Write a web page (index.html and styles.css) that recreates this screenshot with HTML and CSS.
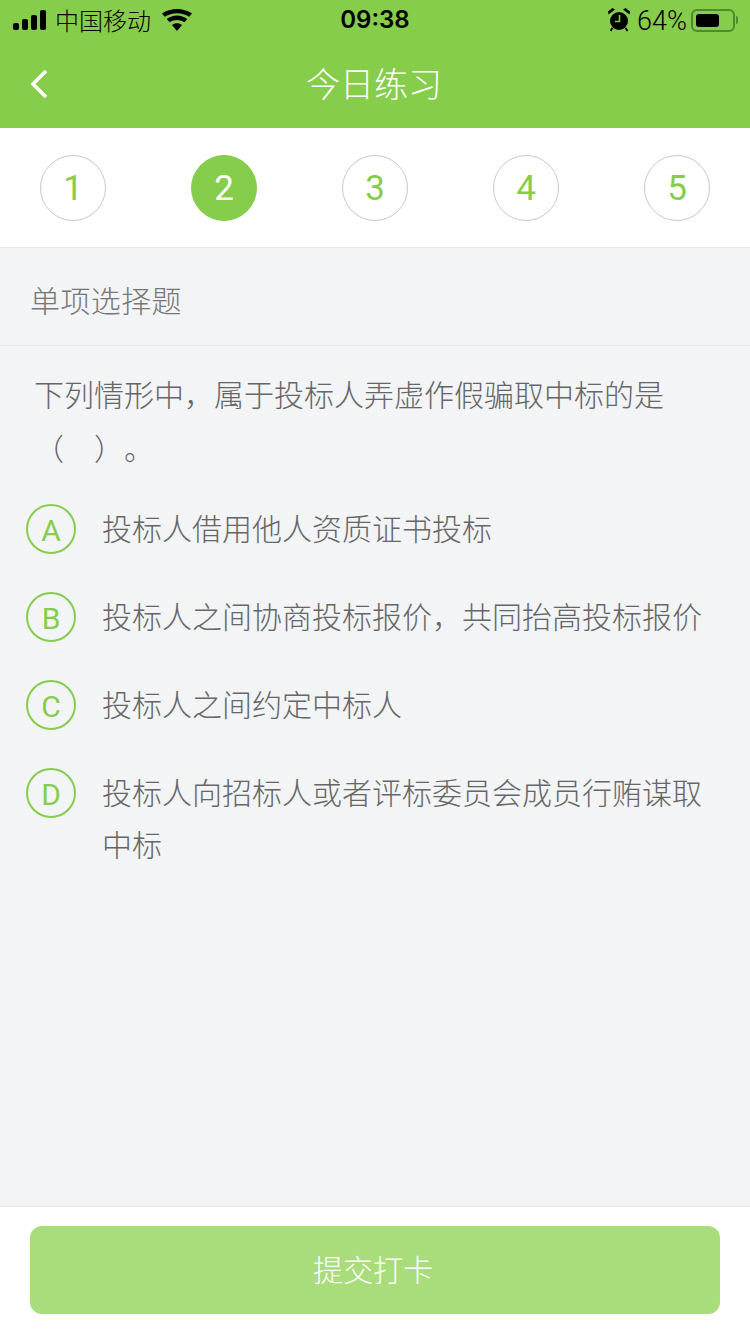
FILE: index.html
```html
<!DOCTYPE html>
<html lang="zh-CN">
<head>
    <meta charset="UTF-8">
    <meta name="viewport" content="width=device-width, initial-scale=1.0">
    <title>今日练习</title>
    <link rel="stylesheet" href="styles.css">
</head>
<body>
    <header class="top">
        <div class="status">
            <div class="status-left">
                <svg class="signal" width="34" height="20" viewBox="0 0 34 20">
                    <rect x="0" y="13" width="6" height="7" rx="2"/>
                    <rect x="9" y="9" width="6" height="11" rx="2"/>
                    <rect x="18" y="5" width="6" height="15" rx="2"/>
                    <rect x="27" y="0" width="6" height="20" rx="2"/>
                </svg>
                <span class="carrier">中国移动</span>
                <svg class="wifi" width="30" height="22" viewBox="0 0 30 22">
                    <path d="M15 22l-5-6c3-2.400 7-2.400 10 0z"/>
                    <path d="M7.700 13.300l-3-3.400c6-4.700 14.600-4.700 20.600 0l-3 3.400c-4.300-3.200-10.300-3.200-14.600 0z"/>
                    <path d="M2.800 7.800L0 4.600c8.700-6.100 21.300-6.100 30 0l-2.800 3.200C19.900 2.900 10.100 2.900 2.800 7.800z"/>
                </svg>
            </div>
            <span class="time">09:38</span>
            <div class="status-right">
                <svg class="alarm" width="22" height="24" viewBox="0 0 22 24">
                    <circle cx="11" cy="13" r="9"/>
                    <path d="M0.500 6.500L7 1.500 4.500 0 0 3.500z"/>
                    <path d="M21.500 6.500L15 1.500 17.500 0 22 3.500z"/>
                    <path d="M4.500 20l-2 3M17.500 20l2 3" stroke="#000" stroke-width="1.800"/>
                    <path d="M11.500 7v6.500H7" fill="none" stroke="#87cd4c" stroke-width="1.600"/>
                </svg>
                <span class="percent">64%</span>
                <div class="battery"><div class="battery-level"></div></div>
                <div class="battery-tip"></div>
            </div>
        </div>
        <div class="nav">
            <svg class="back" width="20" height="32" viewBox="0 0 20 32">
                <path d="M17 3L4 16l13 13" fill="none" stroke="#fff" stroke-width="3.600"/>
            </svg>
            <h1>今日练习</h1>
        </div>
    </header>

    <div class="steps">
        <div class="step">1</div>
        <div class="step active">2</div>
        <div class="step">3</div>
        <div class="step">4</div>
        <div class="step">5</div>
    </div>

    <main class="content">
        <div class="type">单项选择题</div>
        <p class="question">下列情形中，属于投标人弄虚作假骗取中标的是（　）。</p>
        <div class="options">
            <div class="option">
                <div class="letter">A</div>
                <div class="answer">投标人借用他人资质证书投标</div>
            </div>
            <div class="option">
                <div class="letter">B</div>
                <div class="answer">投标人之间协商投标报价，共同抬高投标报价</div>
            </div>
            <div class="option">
                <div class="letter">C</div>
                <div class="answer">投标人之间约定中标人</div>
            </div>
            <div class="option">
                <div class="letter">D</div>
                <div class="answer">投标人向招标人或者评标委员会成员行贿谋取中标</div>
            </div>
        </div>
    </main>

    <footer class="bottom">
        <button class="submit" type="button">提交打卡</button>
    </footer>
</body>
</html>
```
FILE: styles.css
```css
* {
    box-sizing: border-box;
}
body {
    margin: 0;
    height: 1334px;
    display: flex;
    flex-direction: column;
    overflow: hidden;
    background-color: #f2f4f6;
    font-family: "Liberation Sans", "Noto Sans CJK SC", sans-serif;
    color: #666;
}

/* green header */
.top {
    height: 128px;
    background-color: #87cd4c;
}
.status {
    height: 40px;
    padding: 0 12px 0 13px;
    display: flex;
    align-items: center;
    justify-content: space-between;
    position: relative;
    color: #000;
    font-size: 24px;
}
.status-left,
.status-right {
    display: flex;
    align-items: center;
}
.carrier {
    margin: -2px 0 0 8px;
    font-family: "Noto Sans CJK SC", sans-serif;
    font-weight: 300;
}
.wifi {
    margin-left: 11px;
}
.time {
    position: absolute;
    left: 0;
    right: 0;
    top: 5px;
    text-align: center;
    font-family: "Inter", sans-serif;
    font-weight: 600;
    font-size: 24px;
}
.alarm {
    margin-right: 7px;
}
.percent {
    padding-top: 1px;
    font-family: "Roboto", sans-serif;
    font-weight: 300;
    font-size: 27px;
    margin-right: 4px;
}
.battery {
    width: 44px;
    height: 23px;
    padding: 3px;
    border: 2px solid #4f8a2c;
    border-radius: 6px;
}
.battery-level {
    width: 23px;
    height: 100%;
    background-color: #000;
    border-radius: 3px;
}
.battery-tip {
    width: 2px;
    height: 8px;
    margin-left: 1px;
    background-color: #4f8a2c;
    border-radius: 0 2px 2px 0;
}
.nav {
    height: 88px;
    display: flex;
    align-items: center;
    position: relative;
    padding: 0 0 4px 25px;
}
.back {
    position: absolute;
    top: 28px;
    left: 29px;
}
h1 {
    flex: 1;
    margin: 0;
    padding-right: 27px;
    text-align: center;
    font-family: "Noto Sans CJK SC", sans-serif;
    font-size: 34px;
    font-weight: 300;
    color: #fff;
}

/* question number row */
.steps {
    height: 120px;
    padding: 27px 40px 0;
    display: flex;
    justify-content: space-between;
    background-color: #fff;
    border-bottom: 1px solid #e8e8e8;
}
.step {
    width: 66px;
    height: 66px;
    border: 1px solid #c9c9c9;
    border-radius: 50%;
    display: flex;
    align-items: center;
    justify-content: center;
    font-family: "Roboto", sans-serif;
    font-size: 35px;
    color: #87cd4c;
}
.step.active {
    background-color: #87cd4c;
    border-color: #87cd4c;
    color: #fff;
}

.content {
    flex: 1;
    font-family: "Noto Sans CJK SC", sans-serif;
    font-weight: 300;
}
.type {
    height: 98px;
    padding: 27px 30px 0;
    border-bottom: 1px solid #e9ebed;
    font-size: 30px;
    line-height: 48px;
    letter-spacing: 0.4px;
    color: #777;
}
.question {
    margin: 0;
    padding: 20px 30px 0 34px;
    font-size: 30px;
    line-height: 54px;
    text-spacing-trim: space-all;
}
.options {
    padding: 27px 26px 0;
}
.option {
    display: flex;
    margin-bottom: 36px;
}
.letter {
    flex: none;
    width: 50px;
    height: 50px;
    margin: 3px 26px -1px 0;
    padding-top: 2px;
    border: 2px solid #87cd4c;
    border-radius: 50%;
    display: flex;
    align-items: center;
    justify-content: center;
    font-family: "Roboto", sans-serif;
    font-weight: 400;
    font-size: 30px;
    color: #87cd4c;
}
.answer {
    font-size: 30px;
    line-height: 52px;
}

/* submit bar */
.bottom {
    height: 128px;
    padding: 19px 30px 0;
    background-color: #fff;
    border-top: 1px solid #e8e8e8;
}
.submit {
    width: 100%;
    height: 88px;
    padding: 0 4px 4px 0;
    border: none;
    border-radius: 12px;
    background-color: #a9dc7a;
    color: #fff;
    font-family: "Noto Sans CJK SC", sans-serif;
    font-size: 30px;
    font-weight: 300;
}
```
